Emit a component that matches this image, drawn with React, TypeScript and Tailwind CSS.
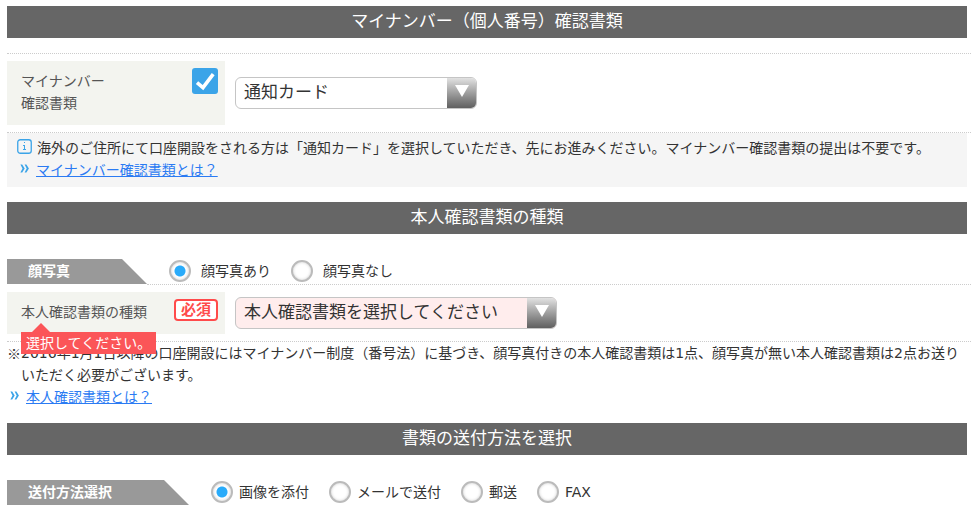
import { useState } from 'react';
import type { ReactNode } from 'react';

const PHOTO_OPTIONS = ['顔写真あり', '顔写真なし'];
const SEND_OPTIONS = ['画像を添付', 'メールで送付', '郵送', 'FAX'];
const MYNUMBER_DOCS = ['通知カード', '個人番号カード', '住民票'];
const IDENTITY_DOCS = ['本人確認書類を選択してください', '運転免許証', 'パスポート'];

function SectionTitle({ children }: { children: ReactNode }) {
  return (
    <h2 className="mr-1 bg-[#666] pb-0.5 text-center text-[17px] leading-[30px] text-white">{children}</h2>
  );
}

function TabLabel({ id, children }: { id: string; children: ReactNode }) {
  return (
    <div
      id={id}
      className="h-[25px] bg-[#999] pr-[77px] pl-[21px] text-sm leading-6 font-bold text-white [clip-path:polygon(0_0,calc(100%-25px)_0,100%_100%,0_100%)]"
    >
      {children}
    </div>
  );
}

function RadioGroup({ name, labelledBy, options, gap }: {
  name: string; labelledBy: string; options: string[]; gap: string;
}) {
  const [value, setValue] = useState(options[0]);
  return (
    <div role="radiogroup" aria-labelledby={labelledBy} className="flex gap-5 pl-[22px]">
      {options.map((o) => (
        <label key={o} className={`flex items-center leading-[22px] ${gap}`}>
          <input
            type="radio" name={name} value={o} checked={value === o} onChange={() => setValue(o)}
            className="size-[22px] shrink-0 appearance-none rounded-full border-2 border-[#bbb] bg-white shadow-[inset_0_0_3px_#ccc] checked:bg-[radial-gradient(circle,#29abfa_5px,#fff_6px)]"
          />
          {o}
        </label>
      ))}
    </div>
  );
}

function SelectBox({ id, options, className }: { id: string; options: string[]; className: string }) {
  return (
    <div className="relative">
      <select
        id={id}
        className={`block h-8 appearance-none rounded-md border border-[#c5c5c5] pr-8 pb-0.5 pl-2 text-[17px] text-[#333] ${className}`}
      >
        {options.map((o) => <option key={o}>{o}</option>)}
      </select>
      <span className="pointer-events-none absolute inset-y-px right-px flex w-[29px] justify-center rounded-r-[5px] bg-linear-to-b from-[#e2e2e2] to-[#606060] pt-[7px]">
        <svg width="14" height="12" viewBox="0 0 14 12" aria-hidden="true"><path d="M0 0h14L7 12z" fill="#fff" /></svg>
      </span>
    </div>
  );
}

function Chevrons() {
  return (
    <svg width="10" height="13" viewBox="0 0 10 13" fill="#3ba4e8" className="shrink-0" aria-hidden="true">
      <path d="M.4 .4h1.8L4.7 4.4 2.2 8.4H.4L2.5 4.4zM4.6 .4h1.8L8.9 4.4 6.4 8.4H4.6L6.7 4.4z" />
    </svg>
  );
}

function InfoIcon() {
  return (
    <svg width="15" height="19" viewBox="0 0 15 19" className="shrink-0" aria-hidden="true">
      <rect x=".75" y=".75" width="13.5" height="13.5" rx="2.5" fill="none" stroke="#3ba4e8" strokeWidth="1.3" />
      <path d="M7 3h1v1H7zM6 6h2v5H7V7H6zM6 10h3v1H6z" fill="#3ba4e8" />
    </svg>
  );
}

function CheckBadge() {
  return (
    <svg width="26" height="26" viewBox="0 0 26 26" role="img" aria-label="入力済み" className="shrink-0">
      <rect width="26" height="26" rx="3" fill="#3ba4e8" />
      <path d="M5 14.6l6 5L21.2 6.2" fill="none" stroke="#fff" strokeWidth="3.6" />
    </svg>
  );
}

export default function App() {
  return (
    <main className="bg-white pt-1.5 pr-px pl-[7px] font-['DejaVu_Sans','Noto_Sans_CJK_JP',sans-serif] text-sm text-[#333]">
      <section>
        <SectionTitle>マイナンバー（個人番号）確認書類</SectionTitle>
        <div className="mt-[15px] flex items-center gap-2.5 border-y border-dotted border-[#ccc] py-[7px]">
          <div className="flex h-16 w-[218px] items-start justify-between bg-[#f3f4ef] pt-[7px] pr-[7px] pl-3.5">
            <label htmlFor="mynumber" className="pt-0.5 leading-[22px] text-[#555]">マイナンバー<br />確認書類</label>
            <CheckBadge />
          </div>
          <SelectBox id="mynumber" options={MYNUMBER_DOCS} className="w-[242px] bg-white" />
        </div>
        <div className="mr-1 bg-[#f5f5f5] pt-1 pb-1.5 pl-2.5 leading-[22px]">
          <p className="flex items-center gap-[5px]">
            <InfoIcon />
            海外のご住所にて口座開設をされる方は「通知カード」を選択していただき、先にお進みください。マイナンバー確認書類の提出は不要です。
          </p>
          <p className="flex items-center gap-1.5 pl-[3px]">
            <Chevrons />
            <a href="#mynumber-docs" className="text-[#2b7bf3] underline">マイナンバー確認書類とは？</a>
          </p>
        </div>
      </section>

      <section className="mt-[15px]">
        <SectionTitle>本人確認書類の種類</SectionTitle>
        <div className="mt-[25px] flex">
          <TabLabel id="photo-label">顔写真</TabLabel>
          <div className="flex-1 border-b border-dotted border-[#ccc] pt-px pb-0.5">
            <RadioGroup name="photo" labelledBy="photo-label" options={PHOTO_OPTIONS} gap="gap-2.5" />
          </div>
        </div>
        <div className="flex items-center gap-2.5 border-b border-dotted border-[#ccc] py-[7px]">
          <div className="relative flex h-[42px] w-[218px] items-start justify-between bg-[#f3f4ef] pt-[7px] pr-[7px] pl-3.5">
            <label htmlFor="identity" className="pt-0.5 leading-[22px] text-[#555]">本人確認書類の種類</label>
            <span className="rounded border-2 border-[#ff4b4b] bg-white px-[5px] text-[15px] leading-[18px] font-bold text-[#ff4b4b]">必須</span>
            <div role="alert" className="absolute top-10 left-3.5 bg-[#fb5558] px-[5px] leading-[22px] text-white">
              <svg width="18" height="9" viewBox="0 0 18 9" className="absolute bottom-full left-[11px]" aria-hidden="true">
                <path d="M9 0l9 9H0z" fill="#fb5558" />
              </svg>
              選択してください。
            </div>
          </div>
          <SelectBox id="identity" options={IDENTITY_DOCS} className="w-[322px] bg-[#ffeded]" />
        </div>
        <p className="flex leading-[22px]">
          <span className="w-3.5 shrink-0 font-['Noto_Sans_CJK_JP',sans-serif]">※</span>
          <span>2016年1月1日以降の口座開設にはマイナンバー制度（番号法）に基づき、顔写真付きの本人確認書類は1点、顔写真が無い本人確認書類は2点お送りいただく必要がございます。</span>
        </p>
        <p className="flex items-center gap-1.5 pl-[3px] leading-[22px]">
          <Chevrons />
          <a href="#identity-docs" className="text-[#2b7bf3] underline">本人確認書類とは？</a>
        </p>
      </section>

      <section className="mt-[15px]">
        <SectionTitle>書類の送付方法を選択</SectionTitle>
        <div className="mt-[25px] flex">
          <TabLabel id="send-label">送付方法選択</TabLabel>
          <div className="pt-px">
            <RadioGroup name="send" labelledBy="send-label" options={SEND_OPTIONS} gap="gap-1.5" />
          </div>
        </div>
      </section>
    </main>
  );
}
